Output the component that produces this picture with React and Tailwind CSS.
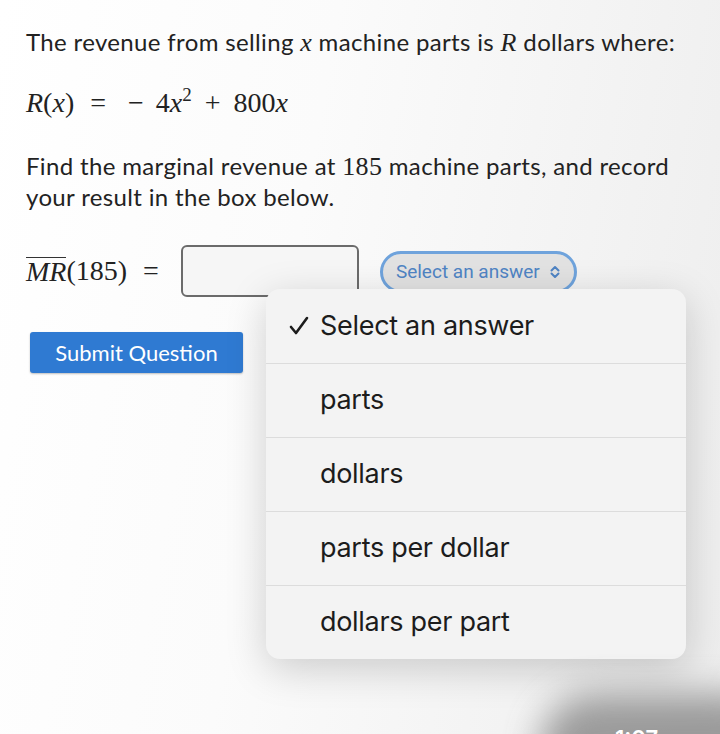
import React from 'react'

const options = ['Select an answer', 'parts', 'dollars', 'parts per dollar', 'dollars per part']

const MathI = ({ children }) => <span className="italic">{children}</span>

const App = () => {
    return (
        <div className="relative w-[720px] h-[734px] overflow-hidden bg-[linear-gradient(100deg,#ffffff_0%,#fbfbfb_40%,#ededed_100%)] text-[#222] font-['Lato',sans-serif]">
            <div className="flex flex-col px-[26px] pt-[26px]">
                {/* Question text */}
                <p className="text-[24px] leading-[32px] tracking-[0.35px] whitespace-nowrap">
                    The revenue from selling <span className="font-['Liberation_Serif',serif] italic text-[26px] leading-none">x</span> machine parts is <span className="font-['Liberation_Serif',serif] italic text-[26px] leading-none">R</span> dollars where:
                </p>

                <div className="mt-[29px] h-[32px] flex items-center font-['Liberation_Serif',serif] text-[28px] leading-none">
                    <MathI>R</MathI>(<MathI>x</MathI>)
                    <span className="ml-[16px]">=</span>
                    <span className="ml-[22px]">−</span>
                    <span className="ml-[12px]">4<MathI>x</MathI><sup className="text-[19px] -top-[11px]">2</sup></span>
                    <span className="ml-[13px]">+</span>
                    <span className="ml-[13px]">800<MathI>x</MathI></span>
                </div>

                <p className="mt-[31px] w-[660px] text-[24px] leading-[31px] tracking-[0.35px]">
                    Find the marginal revenue at <span className="font-['Liberation_Serif',serif] text-[26px] leading-none">185</span> machine parts, and record your result in the box below.
                </p>

                {/* Answer row */}
                <div className="mt-[33px] flex items-center h-[52px]">
                    <div className="font-['Liberation_Serif',serif] text-[28px] flex items-center">
                        <span className="italic border-t border-[#333] pt-[1px] leading-[26px]">MR</span>
                        <span>(185)</span>
                        <span className="ml-[16px]">=</span>
                    </div>
                    <div className="ml-[22px] w-[178px] h-[52px] rounded-[6px] border-2 border-[#6b6b6b] bg-[#f6f6f6]" />
                    <div className="ml-[21px] mt-[2px] h-[42px] px-[13px] flex items-center gap-[9px] rounded-full border-[3px] border-[#6fa3dc] bg-[#e2e2e2] text-[#4f84c4] text-[19px] font-['Roboto',sans-serif]">
                        <span>Select an answer</span>
                        <svg className="w-[12px] h-[14px]" viewBox="0 0 12 14" fill="none" stroke="currentColor" strokeWidth="2" strokeLinecap="round" strokeLinejoin="round">
                            <path d="M2.5 5.5L6 2l3.5 3.5M2.5 8.5L6 12l3.5-3.5" />
                        </svg>
                    </div>
                </div>

                <div className="mt-[35px] ml-[4px]">
                    <button className="w-[213px] h-[41px] rounded-[3px] bg-[#2f7ad2] text-white text-[22px] shadow-[0_1px_2px_rgba(0,0,0,0.25)]">
                        Submit Question
                    </button>
                </div>
            </div>

            {/* Dropdown menu */}
            <div className="absolute left-[266px] top-[289px] w-[420px] rounded-[14px] bg-[#f3f3f3] shadow-[0_10px_40px_rgba(0,0,0,0.18)] font-['Inter',sans-serif] text-[#1c1c1c] text-[27px] overflow-hidden">
                {options.map((opt, i) => (
                    <div key={opt} className={`flex items-center h-[74px] ${i > 0 ? 'border-t border-[#dcdcdc]' : ''}`}>
                        <span className="w-[54px] flex justify-end pr-[10px]">
                            {i === 0 && (
                                <svg className="w-[22px] h-[22px]" viewBox="0 0 22 22" fill="none" stroke="#1c1c1c" strokeWidth="2.6" strokeLinecap="round" strokeLinejoin="round">
                                    <path d="M3 12l5 6L19 3" />
                                </svg>
                            )}
                        </span>
                        <span className="tracking-[-0.3px]">{opt}</span>
                    </div>
                ))}
            </div>

            {/* photo corner shadow */}
            <div className="absolute right-[-60px] bottom-[-70px] w-[240px] h-[110px] rounded-full bg-[#777] blur-[18px] opacity-70" />
            <div className="absolute left-[615px] top-[722px] text-white text-[22px] font-['Inter',sans-serif] font-semibold">1:07</div>
        </div>
    )
}

export default App
